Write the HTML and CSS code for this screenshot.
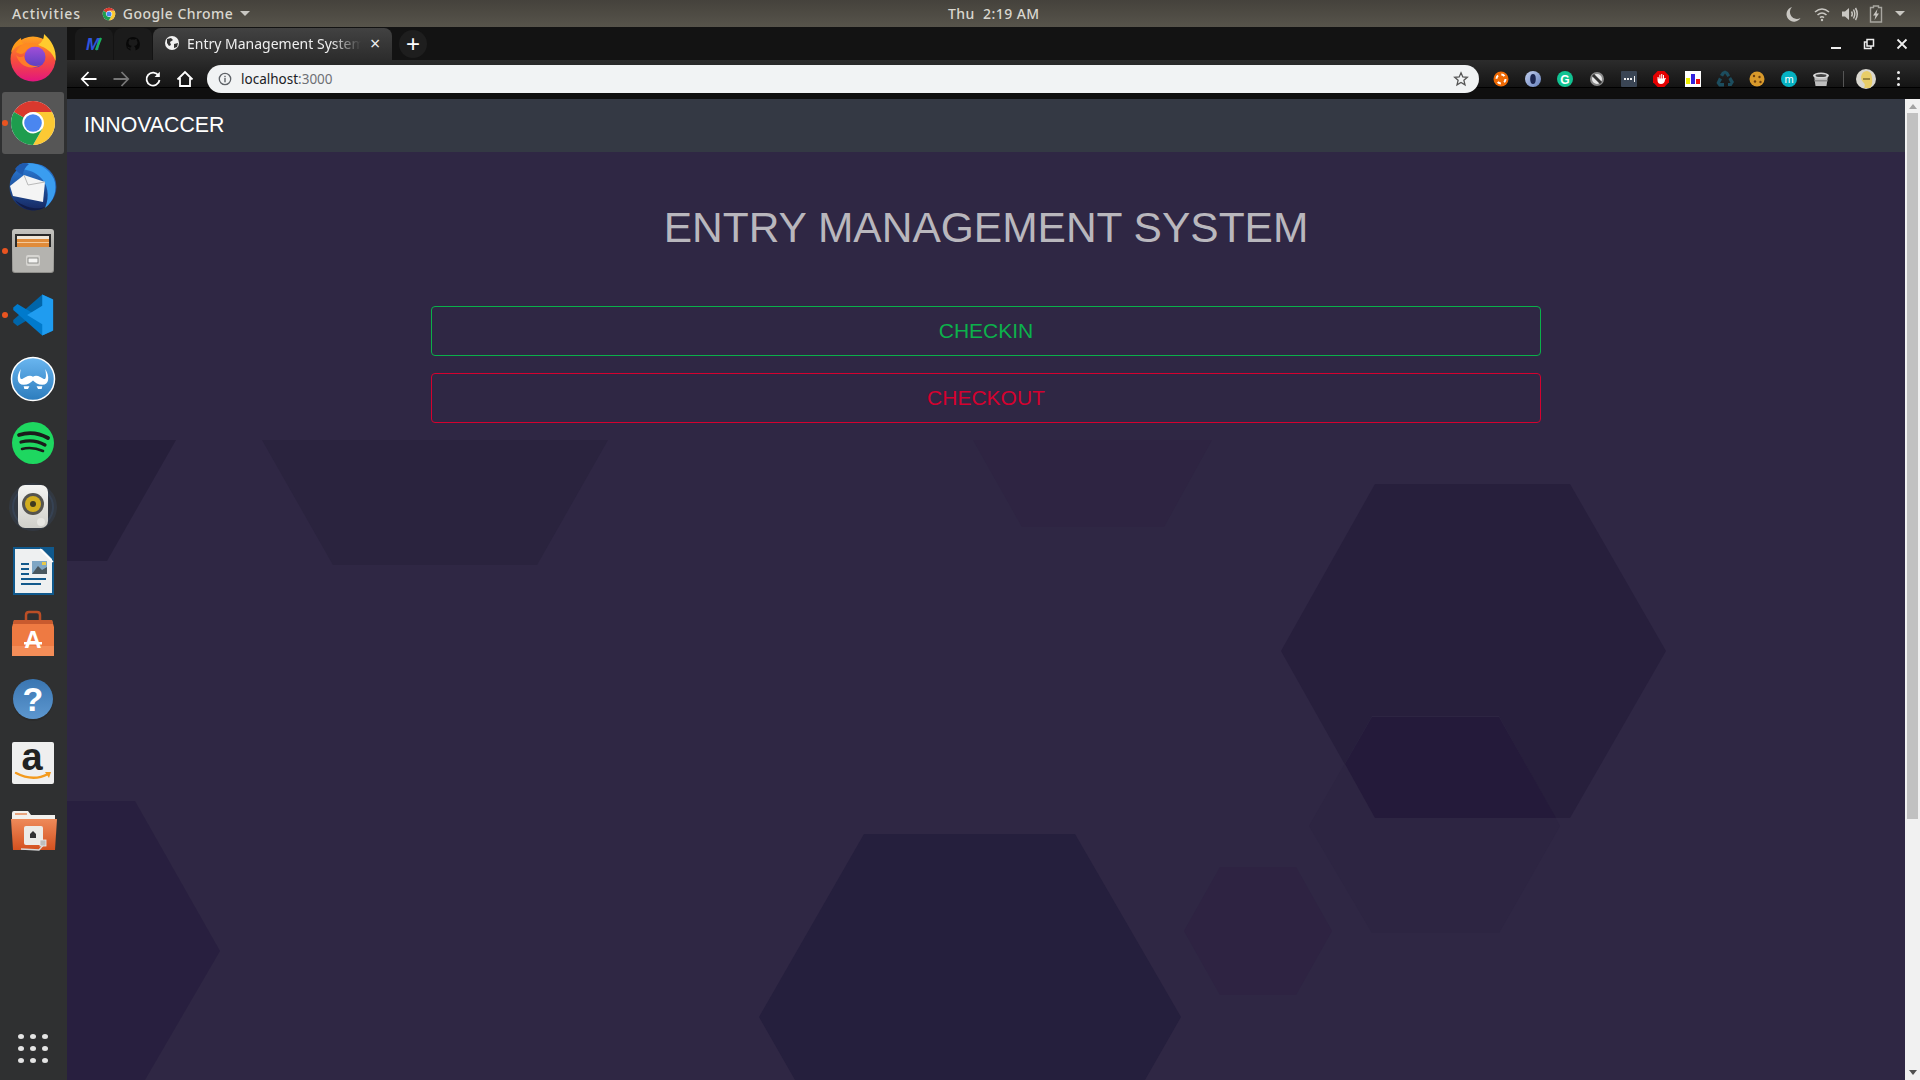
FILE: index.html
```html
<!DOCTYPE html>
<html>
<head>
	<meta name="viewport" content="width=device-width">
	<meta charset="UTF-8">
	<title>Entry Management System</title>
	<link rel="stylesheet" href="styles.css">
</head>
<body>
	<svg class="defs">
		<defs>
			<linearGradient id="ffBase" x1="0" y1="0" x2="0" y2="1"><stop offset="0" stop-color="#ffa51f"/><stop offset=".5" stop-color="#f7503a"/><stop offset="1" stop-color="#e3157f"/></linearGradient>
			<linearGradient id="ffCore" x1="0" y1="0" x2="0" y2="1"><stop offset="0" stop-color="#a24fd8"/><stop offset="1" stop-color="#5a3fc0"/></linearGradient>
			<linearGradient id="tbBase" x1="0" y1="0" x2="0" y2="1"><stop offset="0" stop-color="#2a7fdc"/><stop offset="1" stop-color="#16265f"/></linearGradient>
			<linearGradient id="cabinet" x1="0" y1="0" x2="0" y2="1"><stop offset="0" stop-color="#c4c3bf"/><stop offset="1" stop-color="#8f8e8a"/></linearGradient>
			<linearGradient id="stache" x1="0" y1="0" x2="0" y2="1"><stop offset="0" stop-color="#6ab6f0"/><stop offset="1" stop-color="#2c7cbd"/></linearGradient>
			<linearGradient id="helpBall" x1="0" y1="0" x2="0" y2="1"><stop offset="0" stop-color="#3a76b2"/><stop offset="1" stop-color="#5d97cf"/></linearGradient>
			<linearGradient id="folderBody" x1="0" y1="0" x2="0" y2="1"><stop offset="0" stop-color="#ee8a5a"/><stop offset="1" stop-color="#d4511f"/></linearGradient>
			<linearGradient id="ringBlue" x1="0" y1="0" x2="1" y2="1"><stop offset="0" stop-color="#c3d0ee"/><stop offset="1" stop-color="#6580bd"/></linearGradient>
			<linearGradient id="speakerBody" x1="0" y1="0" x2="0" y2="1"><stop offset="0" stop-color="#f4f4f2"/><stop offset="1" stop-color="#cfcfca"/></linearGradient>
			<symbol id="chromeLogo" viewBox="0 0 56 56">
				<circle cx="28" cy="28" r="22" fill="#fff"/>
				<path d="M9 17A22 22 0 0 1 47 17L28 17A11 11 0 0 0 18.5 22.5Z" fill="#d9392e"/>
				<path d="M47 17A22 22 0 0 1 28 50L37.5 33.5A11 11 0 0 0 28 17Z" fill="#fcc934"/>
				<path d="M9 17A22 22 0 0 0 28 50L37.5 33.5A11 11 0 0 1 18.5 22.5Z" fill="#1e9d4e"/>
				<circle cx="28" cy="28" r="8.8" fill="#4a86f0"/>
			</symbol>
		</defs>
	</svg>

	<header class="topbar">
		<div class="top-left">
			<span class="activities">Activities</span>
			<svg class="app-logo" width="16" height="16"><use href="#chromeLogo"/></svg>
			<span>Google Chrome</span>
			<i class="caret"></i>
		</div>
		<div class="clock">Thu&nbsp; 2:19 AM</div>
		<div class="tray">
			<svg width="18" height="18" viewBox="0 0 18 18"><path d="M7 2A7.5 7.5 0 1 0 15.5 13 7 7 0 0 1 7 2Z" fill="#c9c7c2"/></svg>
			<svg width="18" height="18" viewBox="0 0 18 18" fill="none" stroke="#c9c7c2" stroke-width="1.6"><path d="M2 7Q9 1 16 7M4.5 10Q9 6 13.5 10M7 12.6Q9 11 11 12.6"/><circle cx="9" cy="15" r="1.2" fill="#c9c7c2" stroke="none"/></svg>
			<svg width="18" height="18" viewBox="0 0 18 18" fill="none" stroke="#c9c7c2" stroke-width="1.5"><path d="M1 6.5H4L8 3V15L4 11.5H1Z" fill="#c9c7c2" stroke="none"/><path d="M10.5 6.5Q12 9 10.5 11.5M12.5 4.5Q15 9 12.5 13.5M14.5 3Q18 9 14.5 15"/></svg>
			<svg width="14" height="18" viewBox="0 0 14 18"><path d="M4.5 1H9.5V2.5H12.5V17H1.5V2.5H4.5Z" fill="none" stroke="#a8a6a0" stroke-width="1.4"/><path d="M8.5 4L4 10.5H6.5L5.5 15L10 8.5H7.5Z" fill="#c9c7c2"/></svg>
			<i class="caret"></i>
		</div>
	</header>

	<div class="desk">
		<nav class="dock">
			<div class="dock-item">
				<svg width="64" height="64" viewBox="0 0 64 64">
					<circle cx="32" cy="32" r="22.5" fill="url(#ffBase)"/>
					<path d="M43 7C50 13 56 22 54.500 34 51 24 45 21 37 18 41 15 43 12 43 7Z" fill="#ffcb2e"/>
					<path d="M10 26C11 19 15 14 20 11 20 14 21 16 23 17 17 18 13 21 10 26Z" fill="#ff9a1a"/>
					<circle cx="34" cy="30" r="10.500" fill="url(#ffCore)"/>
					<path d="M15 25C20 15 32 13 41 21 33 18 27 20 24 25 21 28 18 27 15 25Z" fill="#ff8a1f"/>
					<path d="M15 28C18 38 28 44 40 38 32 41 24 37 23 29 20 31 17 30 15 28Z" fill="#ff7a2a"/>
				</svg>
			</div>
			<div class="dock-item active running">
				<svg width="64" height="64" viewBox="0 0 64 64"><use href="#chromeLogo" x="4" y="4" width="56" height="56"/></svg>
			</div>
			<div class="dock-item">
				<svg width="64" height="64" viewBox="0 0 64 64">
					<circle cx="32" cy="32" r="23.500" fill="url(#tbBase)"/>
					<path d="M18 10C28 5 46 9 53 24 57 35 53 46 44 53 49 41 47 28 38 21 32 16 25 14 18 14Z" fill="#3a9df0"/>
					<path d="M14 14C18 8 24 7 28 9 24 12 22 16 22 20 19 19 16 17 14 14Z" fill="#1f5bb0"/>
					<path d="M9 31L23 20 44 27 42 47 12 41Z" fill="#f4f4f4"/>
					<path d="M23 20L27 30 44 27" fill="none" stroke="#b9b9b9" stroke-width="1"/>
					<path d="M14 45C24 53 36 55 44 52 36 58 22 56 14 45Z" fill="#101c48"/>
				</svg>
			</div>
			<div class="dock-item running">
				<svg width="64" height="64" viewBox="0 0 64 64">
					<rect x="11" y="10" width="42" height="44" rx="3" fill="url(#cabinet)"/>
					<rect x="14" y="15" width="36" height="14" fill="#2a2a2a"/>
					<rect x="16" y="17" width="32" height="3" fill="#efe6d8"/>
					<rect x="16" y="20" width="32" height="8" fill="#e08b3a"/>
					<rect x="16" y="23" width="32" height="1" fill="#f3c89a"/>
					<rect x="12" y="28" width="40" height="25" rx="2" fill="#b4b3af"/>
					<rect x="25" y="36" width="14" height="11" rx="2" fill="#d6d5d1"/>
					<rect x="27" y="39" width="10" height="5" fill="#f4f4f2" stroke="#7a7a78" stroke-width=".8"/>
				</svg>
			</div>
			<div class="dock-item running">
				<svg width="64" height="64" viewBox="0 0 64 64">
					<g transform="translate(11 11) scale(.42)">
						<polygon points="72,1 96,12 96,27 13,76 3,68 3,62" fill="#0065a9"/>
						<polygon points="72,99 96,88 96,73 13,24 3,32 3,38" fill="#007acc"/>
						<polygon points="72,1 98,13 98,87 72,99 72,72 36,50 72,28" fill="#1f9cf0"/>
					</g>
				</svg>
			</div>
			<div class="dock-item">
				<svg width="64" height="64" viewBox="0 0 64 64">
					<circle cx="32" cy="32" r="21.500" fill="url(#stache)" stroke="#fff" stroke-width="1.500"/>
					<g transform="translate(32 32) scale(.72) translate(-32 -31)">
						<path d="M32 28C37 24 43 29 47 31 50 32 51 28 49 17 56 28 54 39 45 39 39 39 35 36 32 33 29 36 25 39 19 39 10 39 8 28 15 17 13 28 14 32 17 31 21 29 27 24 32 28Z" fill="#fff"/>
						<path d="M19 41H27L25 45H20ZM37 41H45L44 45H39Z" fill="#fff"/>
					</g>
				</svg>
			</div>
			<div class="dock-item">
				<svg width="64" height="64" viewBox="0 0 64 64" fill="none" stroke="#1b1b1b" stroke-linecap="round">
					<circle cx="32" cy="32" r="21" fill="#1ed760" stroke="none"/>
					<path d="M18 24C27 21 38 22 47 27" stroke-width="3.800"/>
					<path d="M20 31C28 29 37 30 44 34" stroke-width="3.200"/>
					<path d="M21 38C28 36 35 37 42 40" stroke-width="2.600"/>
				</svg>
			</div>
			<div class="dock-item">
				<svg width="64" height="64" viewBox="0 0 64 64">
					<circle cx="32" cy="32" r="24" fill="#44608c" fill-opacity=".18"/>
					<circle cx="32" cy="32" r="20" fill="none" stroke="#44608c" stroke-opacity=".25" stroke-width="2"/>
					<rect x="17" y="10" width="30" height="43" rx="7" fill="url(#speakerBody)"/>
					<circle cx="32" cy="29" r="11" fill="#55544f"/>
					<circle cx="32" cy="29" r="8" fill="#d2ad1e"/>
					<circle cx="32" cy="29" r="3" fill="#3f3a20"/>
					<circle cx="40" cy="47" r="4" fill="#e6e6e2"/>
				</svg>
			</div>
			<div class="dock-item">
				<svg width="64" height="64" viewBox="0 0 64 64">
					<path d="M12 8H53V56H12Z" fill="#10598d"/>
					<path d="M14 10H41L51 20V54H14Z" fill="#eef0f1"/>
					<path d="M41 8H53V19Z" fill="#10598d"/>
					<path d="M39 10L52 23" stroke="#fff" stroke-width="1.500"/>
					<path d="M20 24H28V26H20ZM20 29H28V31H20ZM20 34H28V36H20ZM20 39H45V41H20ZM20 44H40V46H20Z" fill="#12598c"/>
					<rect x="31" y="22" width="15" height="13" fill="#7fa6c4"/>
					<path d="M31 35L37 27 41 31 46 28V35Z" fill="#49575f"/>
					<rect x="41" y="23" width="4" height="3" fill="#e8c94a"/>
				</svg>
			</div>
			<div class="dock-item">
				<svg width="64" height="64" viewBox="0 0 64 64">
					<path d="M25 18V12Q25 9 28 9H36Q39 9 39 12V18" fill="none" stroke="#bb4e26" stroke-width="2.500"/>
					<path d="M13 17H51L53 24V53H11V24Z" fill="#ee7a42"/>
					<path d="M13 17H51L52 21H12Z" fill="#c85a2e"/>
					<rect x="11" y="43" width="42" height="10" fill="#f48d58"/>
					<text x="32" y="45" class="store-a">A</text>
					<rect x="23" y="39" width="18" height="2.500" fill="#fff"/>
				</svg>
			</div>
			<div class="dock-item">
				<svg width="64" height="64" viewBox="0 0 64 64">
					<circle cx="32" cy="34" r="20" fill="#222" fill-opacity=".35"/>
					<circle cx="32" cy="32" r="20" fill="url(#helpBall)"/>
					<text x="32" y="44" class="help-mark">?</text>
				</svg>
			</div>
			<div class="dock-item">
				<svg width="64" height="64" viewBox="0 0 64 64">
					<rect x="11" y="11" width="42" height="42" rx="2" fill="#efefef"/>
					<text x="31" y="39" class="amazon-a">a</text>
					<path d="M15 42Q32 51 47 43" fill="none" stroke="#f39a1d" stroke-width="2.400" stroke-linecap="round"/>
					<path d="M44 41L50 41 48 47Z" fill="#f39a1d"/>
				</svg>
			</div>
			<div class="dock-item">
				<svg width="64" height="64" viewBox="0 0 64 64">
					<path d="M11 18Q11 16 13 16H27L30 20H54V30H11Z" fill="#f3f1ee"/>
					<rect x="14" y="18" width="12" height="2" fill="#e8a47e"/>
					<path d="M10 24H56L54 55H12Z" fill="url(#folderBody)"/>
					<rect x="23" y="31" width="19" height="19" rx="2" fill="#ecebe7"/>
					<path d="M29 43V39L32 36 35 39V43Z" fill="#333"/>
					<path d="M20 54L38 55 44 48" fill="none" stroke="#d8d8d8" stroke-width="1.300"/>
					<rect x="39" y="45" width="6" height="6" fill="#bdbdbd" stroke="#eee" stroke-width=".8"/>
				</svg>
			</div>
			<div class="apps">
				<i></i><i></i><i></i><i></i><i></i><i></i><i></i><i></i><i></i>
			</div>
		</nav>

		<div class="browser">
			<div class="tabstrip">
				<div class="tab small">
					<svg width="20" height="20" viewBox="0 0 20 20"><text x="9" y="16" class="tab-m">M</text><path d="M12 16L17 4" stroke="#19b35a" stroke-width="2.200"/></svg>
				</div>
				<div class="tab small">
					<svg width="16" height="16" viewBox="0 0 16 16"><path d="M8 1A7 7 0 0 0 5.500 14.500V12.500C3 13 3 11 2 10.500 4 10.500 4 12 6 11.500 6 10.500 6.500 10 7 10 4 9.500 3.500 8 3.500 6.500 3.500 5.500 4 5 4.300 4.500 4 3.500 4.300 3 4.500 2.700 5.500 2.700 6 3.500 6.500 3.700 7.500 3.400 8.500 3.400 9.500 3.700 10 3 10.800 2.700 11.500 2.700 11.800 3 12 3.500 11.700 4.500 12 5 12.500 5.500 12.500 6.500 12.500 8 12 9.500 9 10 9.500 10.500 10.500 11.500 10.500 12.500V14.500A7 7 0 0 0 8 1Z" fill="#080808"/></svg>
				</div>
				<div class="tab current">
					<svg width="16" height="16" viewBox="0 0 16 16"><circle cx="8" cy="8" r="7" fill="#f1f1f1"/><path d="M3 4L7 3 9 5 6 7 7 10 5 11 3 8ZM10 9L14 8 13 12 10 13Z" fill="#333"/></svg>
					<span class="tab-title">Entry Management System</span>
					<span class="tab-close">×</span>
				</div>
				<div class="new-tab">+</div>
				<div class="win-controls">
					<svg width="12" height="12" viewBox="0 0 12 12"><rect x="1" y="9" width="10" height="2" fill="#eee"/></svg>
					<svg width="12" height="12" viewBox="0 0 12 12" fill="none" stroke="#eee" stroke-width="1.500"><rect x="4" y="1.500" width="6.500" height="6.500"/><path d="M4 4H1.500V10.500H8V8" /></svg>
					<svg width="12" height="12" viewBox="0 0 12 12" stroke="#eee" stroke-width="1.800"><path d="M1.500 1.500L10.500 10.500M10.500 1.500L1.500 10.500"/></svg>
				</div>
			</div>

			<div class="toolbar">
				<div class="nav-btn">
					<svg width="18" height="18" viewBox="0 0 18 18" fill="none" stroke="#fff" stroke-width="1.800"><path d="M8.500 2L1.800 9 8.500 16M2 9H16.500"/></svg>
				</div>
				<div class="nav-btn">
					<svg width="18" height="18" viewBox="0 0 18 18" fill="none" stroke="#777" stroke-width="1.800"><path d="M9.500 2L16.200 9 9.500 16M16 9H1.500"/></svg>
				</div>
				<div class="nav-btn">
					<svg width="18" height="18" viewBox="0 0 18 18" fill="none" stroke="#fff" stroke-width="1.800"><path d="M14.500 5.500A6.500 6.500 0 1 0 15.500 10"/><path d="M15.800 1.800V7H10.600Z" fill="#fff" stroke="none"/></svg>
				</div>
				<div class="nav-btn">
					<svg width="18" height="18" viewBox="0 0 18 18" fill="none" stroke="#fff" stroke-width="1.800"><path d="M1.500 9.500L9 2 16.500 9.500M4 8V16H14V8"/></svg>
				</div>
				<div class="omnibox">
					<svg width="14" height="14" viewBox="0 0 14 14"><circle cx="7" cy="7" r="5.700" fill="none" stroke="#5f6368" stroke-width="1.300"/><rect x="6.300" y="6" width="1.400" height="4.300" fill="#5f6368"/><rect x="6.300" y="3.800" width="1.400" height="1.400" fill="#5f6368"/></svg>
					<span class="url">localhost<span class="url-port">:3000</span></span>
					<svg class="star" width="16" height="16" viewBox="0 0 16 16"><path d="M8 1.800L9.800 6 14.300 6.300 10.900 9.300 12 13.800 8 11.400 4 13.800 5.100 9.300 1.700 6.300 6.200 6Z" fill="none" stroke="#555" stroke-width="1.300"/></svg>
				</div>
				<div class="extensions">
					<svg width="32" height="32" viewBox="0 0 32 32"><circle cx="16" cy="16" r="7.500" fill="#ee6a05"/><circle cx="16" cy="16" r="4.500" fill="none" stroke="#fff" stroke-width="2" stroke-dasharray="3.500 3.500"/><circle cx="16" cy="16" r="2" fill="#ee6a05"/></svg>
					<svg width="32" height="32" viewBox="0 0 32 32"><circle cx="16" cy="16" r="8" fill="url(#ringBlue)"/><ellipse cx="16" cy="16" rx="2.800" ry="5" fill="#1b2650"/></svg>
					<svg width="32" height="32" viewBox="0 0 32 32"><circle cx="16" cy="16" r="8" fill="#11c392"/><text x="16" y="20.500" class="ext-g">G</text></svg>
					<svg width="32" height="32" viewBox="0 0 32 32"><circle cx="16" cy="16" r="6" fill="#e8e8e8" stroke="#888" stroke-width="2"/><path d="M12 12L20 20" stroke="#333" stroke-width="3"/></svg>
					<svg width="32" height="32" viewBox="0 0 32 32"><rect x="8" y="8" width="16" height="16" rx="1" fill="#3a4554"/><path d="M11 15h2v2h-2zM14 15h2v2h-2zM17 15h2v2h-2zM21 13h1v6h-1z" fill="#eee"/></svg>
					<svg width="32" height="32" viewBox="0 0 32 32"><polygon points="12.700,8 19.300,8 24,12.700 24,19.300 19.300,24 12.700,24 8,19.300 8,12.700" fill="#e40000"/><path d="M12.500 14V17Q12.500 21 16 21 19.500 21 20 17L21 15H19.500L19 16V12H18V15.500H17.300V11H16.200V15.500H15.400V11.800H14.400V15.500H13.600V14Z" fill="#fff"/></svg>
					<svg width="32" height="32" viewBox="0 0 32 32"><rect x="8" y="8" width="16" height="16" fill="#fff"/><rect x="9" y="15" width="4" height="6" fill="#eeee00"/><rect x="14" y="11" width="4" height="10" fill="#3322dd"/><rect x="19" y="16" width="4" height="5" fill="#ee1111"/></svg>
					<svg width="32" height="32" viewBox="0 0 32 32" fill="#1c4d5e"><path d="M13 9L16 7.500 19 9 21 12.500 18.500 14 16 10.500 14 13.500 11 12Z"/><path d="M22 14L25 19 22.500 23 19 23V20H21.500L19.500 16Z"/><path d="M10 14.500L13 16.500 11 20H15V23.500H10L7.500 20Z"/></svg>
					<svg width="32" height="32" viewBox="0 0 32 32"><circle cx="16" cy="16" r="7.500" fill="#d99a2b"/><circle cx="13" cy="13" r="1.200" fill="#6b3e10"/><circle cx="18.500" cy="14" r="1.200" fill="#6b3e10"/><circle cx="14" cy="18.500" r="1.200" fill="#6b3e10"/><circle cx="19.500" cy="19" r="1.200" fill="#6b3e10"/></svg>
					<svg width="32" height="32" viewBox="0 0 32 32"><circle cx="16" cy="16" r="8" fill="#05b2c2"/><text x="16" y="19.500" class="ext-m">m</text></svg>
					<svg width="32" height="32" viewBox="0 0 32 32"><path d="M9 12.500L10.500 23H21.500L23 12.500Z" fill="#bdbdbd"/><ellipse cx="16" cy="12.500" rx="8" ry="3" fill="#d8d8d8"/><ellipse cx="16" cy="12.500" rx="5.500" ry="1.500" fill="#444"/><rect x="9.500" y="17" width="13" height="1.500" fill="#8c8c8c"/></svg>
				</div>
				<div class="toolbar-sep"></div>
				<svg class="avatar" width="22" height="22" viewBox="0 0 22 22"><circle cx="11" cy="11" r="10" fill="#d9d7cf"/><path d="M6 9Q7 3 12 3 17 4 17 10 18 16 15 20H9Q11 16 8 14Q6 12 6 9Z" fill="#e8cd68"/><path d="M8 11H15" stroke="#6a5a20" stroke-width="1.200"/></svg>
				<div class="menu-dots"><i></i><i></i><i></i></div>
			</div>

			<div class="viewport">
				<div class="page">
					<!-- hexagons use screen coordinates -->
					<svg class="hexes" viewBox="67 99 1838 981" width="1838" height="981">
						<polygon points="67,440 176,440 107,561 67,561" fill="#261f3a"/>
						<polygon points="262,440 608,440 537,565 333,565" fill="#2a233e"/>
						<polygon points="973,440 1212,440 1164,527 1022,527" fill="#2e2442"/>
						<polygon points="1375,484 1570,484 1666,651 1570,818 1375,818 1281,651" fill="#271f3c"/>
						<polygon points="1372,716 1499,716 1560,826 1499,933 1372,933 1309,826" fill="#2d2542"/>
						<polygon points="1372,717 1499,717 1556,818 1375,818 1345,764" fill="#241a3a"/>
						<polygon points="1220,867 1296,867 1332,931 1296,995 1220,995 1184,931" fill="#2e2342"/>
						<polygon points="864,834 1075,834 1181,1017 1145,1080 795,1080 759,1017" fill="#251f3d"/>
						<polygon points="67,801 135,801 220,951 145,1080 67,1080" fill="#281f3f"/>
					</svg>
					<div class="navbar">INNOVACCER</div>
					<main class="content">
						<h1 class="title">ENTRY MANAGEMENT SYSTEM</h1>
						<div class="actions">
							<a class="btn btn-in">CHECKIN</a>
							<a class="btn btn-out">CHECKOUT</a>
						</div>
					</main>
				</div>
				<div class="scrollbar">
					<i class="arrow-up"></i>
					<div class="track"><div class="thumb"></div></div>
					<i class="arrow-down"></i>
				</div>
			</div>
		</div>
	</div>
</body>
</html>
```

FILE: styles.css
```css
html, body { margin: 0; height: 100%; overflow: hidden; }
body { display: flex; flex-direction: column; width: 1920px; height: 1080px; background: #2f2744; font-family: "Liberation Sans", Arial, sans-serif; }
i { display: block; }
svg { display: block; flex: none; }
.defs { position: absolute; width: 0; height: 0; }

/* ubuntu top bar */
.topbar { display: grid; grid-template-columns: 948px auto 1fr; align-items: center; height: 27px; background: linear-gradient(#45423c, #57544b); color: #d9d7d0; font: 500 14px "Noto Sans", sans-serif; letter-spacing: .45px; }
.top-left { display: flex; align-items: center; }
.activities { margin: 0 20px 0 12px; letter-spacing: .85px; }
.app-logo { margin-right: 6px; }
.caret { width: 0; height: 0; margin-left: 7px; border: 5px solid transparent; border-top: 5px solid #c9c7c2; border-bottom: 0; }
.clock { font-weight: 500; }
.tray { display: flex; align-items: center; justify-content: flex-end; gap: 10px; padding-right: 15px; }
.tray .caret { margin-left: 2px; }

.desk { display: flex; flex: 1; min-height: 0; }

/* launcher */
.dock { display: flex; flex-direction: column; width: 67px; flex: none; background: #2f3031; }
.dock-item { position: relative; height: 64px; flex: none; padding-left: 1px; }
.dock-item.active::after { content: ""; position: absolute; left: 2px; top: 1px; width: 62px; height: 62px; border-radius: 3px; background: #565656; z-index: 0; }
.dock-item svg { position: relative; z-index: 1; }
.dock-item.running::before { content: ""; position: absolute; left: 2px; top: 29px; width: 6px; height: 6px; border-radius: 50%; background: #e95420; z-index: 2; }
.apps { display: grid; grid-template-columns: repeat(3, 6px); gap: 7px 6px; margin: auto 0 17px 18px; }
.apps i { width: 6px; height: 5px; border-radius: 50%; background: #e4e4e4; }

.browser { display: flex; flex-direction: column; flex: 1; min-width: 0; }

/* tabs */
.tabstrip { display: flex; align-items: flex-end; height: 33px; padding-left: 8px; background: #131313; box-sizing: border-box; }
.tab { display: flex; align-items: center; height: 32px; box-sizing: border-box; border-radius: 8px 8px 0 0; }
.tab.small { justify-content: center; width: 38px; margin-right: 1px; background: #1b1b1b; }
.tab.current { width: 239px; padding: 0 10px 2px 11px; background: linear-gradient(#424242, #2c2c2c); color: #eee; font: 14px "Noto Sans", sans-serif; }
.tab-title { width: 176px; margin-left: 7px; overflow: hidden; white-space: nowrap; -webkit-mask-image: linear-gradient(90deg, #000 82%, transparent 99%); mask-image: linear-gradient(90deg, #000 82%, transparent 99%); }
.tab-close { margin-left: 7px; font-size: 18px; line-height: 1; color: #eee; }
.tab-m { font: italic bold 17px "Liberation Sans", sans-serif; fill: #2f55e0; text-anchor: middle; }
.new-tab { width: 28px; height: 28px; margin: 0 0 2px 7px; border-radius: 50%; background: #1e1e1e; color: #fff; font: 24px/27px "Liberation Sans", sans-serif; text-align: center; }
.win-controls { display: flex; gap: 21px; margin-left: auto; align-self: center; padding-right: 12px; }

/* toolbar */
.toolbar { display: flex; align-items: flex-start; height: 39px; box-sizing: border-box; padding: 5px 20px 0 6px; background: linear-gradient(#2c2c2c 0, #141414 27px, #000 27px, #000 28px, #0f0f0f 28px); }
.nav-btn { display: flex; align-items: center; justify-content: center; width: 32px; height: 28px; flex: none; }
.omnibox { display: flex; align-items: center; flex: 1; min-width: 0; height: 28px; margin-left: 6px; padding: 0 10px 0 11px; background: #f1f3f4; border-radius: 14px; font: 13.500px "Noto Sans", sans-serif; color: #202124; }
.url { margin-left: 9px; }
.url-port { color: #6e7074; }
.star { margin-left: auto; }
.extensions { display: flex; flex: none; height: 28px; margin-left: 6px; align-items: center; }
.ext-g { font: bold 12px "Liberation Sans", sans-serif; fill: #fff; text-anchor: middle; }
.ext-m { font: 11px "Liberation Sans", sans-serif; fill: #fff; text-anchor: middle; }
.toolbar-sep { flex: none; width: 1px; height: 16px; margin: 6px 11px 0 6px; background: #555; }
.avatar { margin-top: 3px; }
.menu-dots { display: flex; flex-direction: column; flex: none; gap: 3px; margin: 6px 0 0 20px; }
.menu-dots i { width: 3px; height: 3px; background: #eee; border-radius: 50%; }

/* dock glyphs */
.store-a { font: bold 24px "Liberation Sans", sans-serif; fill: #fff; text-anchor: middle; }
.help-mark { font: bold 34px "Liberation Sans", sans-serif; fill: #fff; text-anchor: middle; }
.amazon-a { font: bold 38px "Liberation Sans", sans-serif; fill: #222; text-anchor: middle; }

/* page */
.viewport { display: flex; flex: 1; min-height: 0; }
.page { position: relative; flex: 1; min-width: 0; isolation: isolate; background: #2f2744; }
.hexes { position: absolute; left: 0; top: 0; z-index: -1; }
.navbar { height: 53px; box-sizing: border-box; padding: 0 0 0 17px; background: #343944; color: #fff; font-size: 21.300px; line-height: 52px; }
.content { width: 1110px; margin: 0 auto; }
.title { margin: 52px 0 54px; color: #b9b7bd; font-size: 42.500px; font-weight: 400; line-height: 48px; text-align: center; }
.actions { display: flex; flex-direction: column; gap: 17px; }
.btn { height: 50px; box-sizing: border-box; border: 1px solid; border-radius: 4px; font-size: 21px; line-height: 48px; text-align: center; }
.btn-in { border-color: #0ab04a; color: #0cb14b; }
.btn-out { border-color: #d5012f; color: #d5012f; }

/* scrollbar */
.scrollbar { display: flex; flex-direction: column; align-items: center; width: 15px; flex: none; background: #f1f1f1; }
.arrow-up { width: 0; height: 0; margin: 5px 0 4px; border: 4px solid transparent; border-bottom: 5px solid #a3a3a3; border-top: 0; }
.track { flex: 1; width: 11px; }
.thumb { width: 11px; height: 706px; background: #c1c1c1; }
.arrow-down { width: 0; height: 0; margin: 4px 0 5px; border: 4px solid transparent; border-top: 5px solid #505050; border-bottom: 0; }
```
